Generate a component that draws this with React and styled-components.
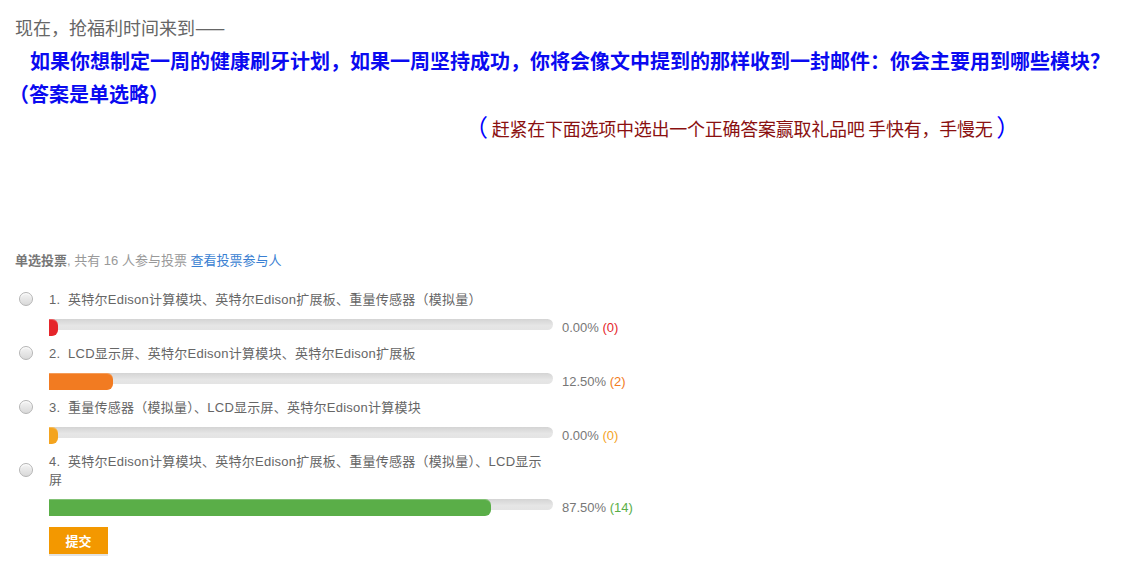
import React from 'react';
import styled, { createGlobalStyle } from 'styled-components';

const GlobalStyle = createGlobalStyle`
  html, body {
    margin: 0;
    padding: 0;
    background: #fff;
  }
  body {
    font-family: "Liberation Sans", "Noto Sans CJK SC", sans-serif;
  }
`;

const Page = styled.div`
  padding: 12px 15px 0;
  width: 1132px;
  box-sizing: border-box;
`;

const Intro = styled.p`
  margin: 0;
  font-size: 18px;
  line-height: 30px;
  color: #666;
  font-family: "Noto Sans CJK SC", sans-serif;
`;

const Question = styled.p`
  margin: 2px 0 0;
  font-size: 20px;
  line-height: 33px;
  font-weight: 700;
  color: #0a0af0;
  text-indent: 15px;
  font-family: "Noto Sans CJK SC", sans-serif;
  white-space: nowrap;
`;

const Answer = styled.span`
  margin-left: -6px;
`;

const Hint = styled.p`
  margin: -1px 0 0;
  padding-left: 449px;
  line-height: 33px;
  font-family: "Noto Sans CJK SC", sans-serif;
  white-space: nowrap;
`;

const Paren = styled.span`
  font-size: 24px;
  color: #0000ff;
`;

const HintText = styled.span`
  font-size: 18px;
  letter-spacing: -0.25px;
  color: #8a1010;
`;

const PollHead = styled.div`
  margin-top: 106px;
  font-size: 13px;
  line-height: 18px;
  color: #999;
`;

const Strong = styled.strong`
  color: #777;
`;

const Link = styled.a`
  color: #3a7fd2;
  text-decoration: none;
`;

const Options = styled.div`
  margin-top: 21px;
  display: flex;
  flex-direction: column;
  gap: 9px;
`;

const Option = styled.div`
  display: grid;
  grid-template-columns: 34px 504px auto;
  grid-template-rows: auto 17px;
  row-gap: 10px;
`;

const RadioCell = styled.div`
  display: flex;
  align-items: center;
  margin-top: -2px;
`;

const Radio = styled.span`
  margin-left: 4px;
  width: 12px;
  height: 12px;
  border-radius: 50%;
  border: 1px solid #b5b5b5;
  background: linear-gradient(#f4f4f4, #d9d9d9);
  box-shadow: inset 0 1px 1px #fff;
`;

const Label = styled.div`
  grid-column: 2 / 3;
  padding-right: 10px;
  font-size: 13px;
  line-height: 18px;
  letter-spacing: 0.25px;
  color: #666;
`;

const Track = styled.div`
  grid-column: 2 / 3;
  height: 11px;
  border-radius: 0 6px 6px 0;
  background: linear-gradient(#d4d4d4, #e6e6e6 60%, #e4e4e4);
`;

const Fill = styled.div`
  height: 17px;
  border-radius: 0 6px 6px 0;
  background: ${({ color }) => color};
  box-shadow: inset 0 1px 0 rgba(255, 255, 255, 0.25);
`;

const Percent = styled.div`
  padding-left: 9px;
  font-size: 13px;
  line-height: 18px;
  color: #777;
  white-space: nowrap;
`;

const Count = styled.span`
  color: ${({ color }) => color};
`;

const Submit = styled.button`
  margin: 11px 0 0 34px;
  width: 59px;
  height: 29px;
  padding: 0;
  border: 0;
  border-bottom: 2px solid #e2e2e2;
  background: #f39800;
  background-clip: padding-box;
  color: #fff;
  font-size: 13px;
  font-weight: 700;
  font-family: "Noto Sans CJK SC", sans-serif;
  cursor: pointer;
`;

const options = [
  { text: '英特尔Edison计算模块、英特尔Edison扩展板、重量传感器（模拟量）', pct: 0, count: 0, color: '#e5262b' },
  { text: 'LCD显示屏、英特尔Edison计算模块、英特尔Edison扩展板', pct: 12.5, count: 2, color: '#f27b21' },
  { text: '重量传感器（模拟量）、LCD显示屏、英特尔Edison计算模块', pct: 0, count: 0, color: '#f4a41f' },
  { text: '英特尔Edison计算模块、英特尔Edison扩展板、重量传感器（模拟量）、LCD显示屏', pct: 87.5, count: 14, color: '#5aae48' },
];

const App = () => {
  return (
    <Page>
      <GlobalStyle />
      <Intro>现在，抢福利时间来到——</Intro>
      <Question>
        如果你想制定一周的健康刷牙计划，如果一周坚持成功，你将会像文中提到的那样收到一封邮件：你会主要用到哪些模块？
        <br />
        <Answer>（答案是单选略）</Answer>
      </Question>
      <Hint>
        <Paren>（</Paren>
        <HintText> 赶紧在下面选项中选出一个正确答案赢取礼品吧 手快有，手慢无 </HintText>
        <Paren>）</Paren>
      </Hint>
      <PollHead>
        <Strong>单选投票</Strong>, 共有 16 人参与投票 <Link href="#">查看投票参与人</Link>
      </PollHead>
      <Options>
        {options.map((o, i) => (
          <Option key={i}>
            <RadioCell>
              <Radio />
            </RadioCell>
            <Label>{i + 1}.&nbsp; {o.text}</Label>
            <div />
            <Track>
              <Fill color={o.color} style={{ width: Math.max(9, Math.round(504 * o.pct / 100) + 1) }} />
            </Track>
            <Percent>
              {o.pct.toFixed(2)}% <Count color={o.color}>({o.count})</Count>
            </Percent>
          </Option>
        ))}
      </Options>
      <Submit>提交</Submit>
    </Page>
  );
};

export default App;
